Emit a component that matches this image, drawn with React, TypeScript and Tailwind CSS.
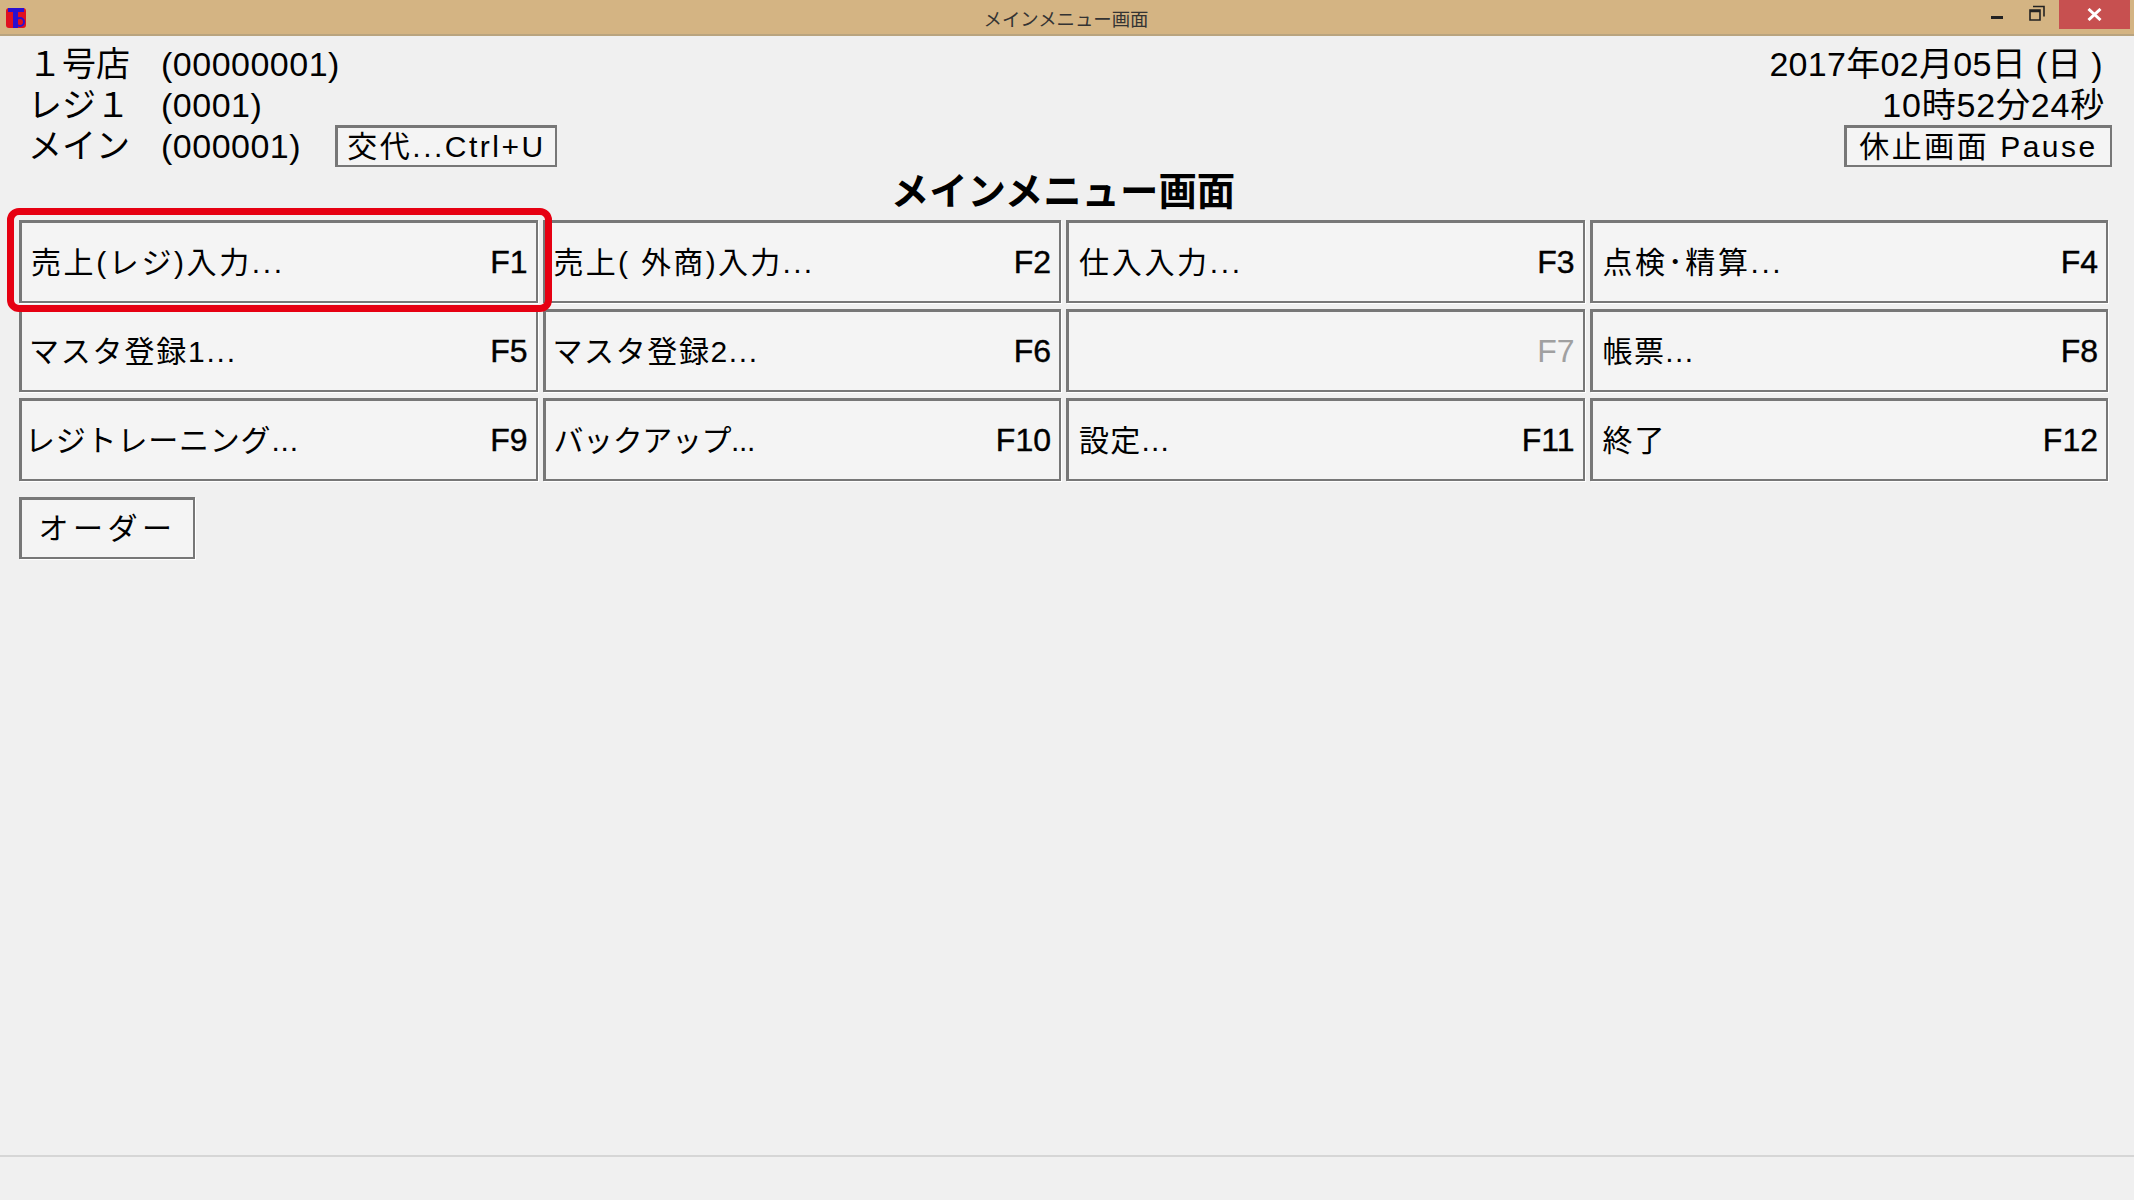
const FONT = "font-['Liberation_Sans','Noto_Sans_CJK_JP',sans-serif]";

const menu = [
  { label: "売上(レジ)入力...", key: "F1", pad: "pl-[9px]", track: "tracking-[2.6px]" },
  { label: "売上( 外商)入力...", key: "F2", pad: "pl-[8px]", track: "tracking-[2.3px]" },
  { label: "仕入入力...", key: "F3", pad: "pl-[10px]", track: "tracking-[2.7px]" },
  { label: "点検･精算...", key: "F4", pad: "pl-[10px]", track: "tracking-[2.6px]" },
  { label: "マスタ登録1...", key: "F5", pad: "pl-[7px]", track: "tracking-[1.8px]" },
  { label: "マスタ登録2...", key: "F6", pad: "pl-[7px]", track: "tracking-[1.6px]" },
  { label: "", key: "F7", pad: "pl-[10px]", track: "", disabled: true },
  { label: "帳票...", key: "F8", pad: "pl-[10px]", track: "tracking-[1.4px]" },
  { label: "レジトレーニング...", key: "F9", pad: "pl-[3px]", track: "tracking-[0.8px]" },
  { label: "バックアップ...", key: "F10", pad: "pl-[8px]", track: "tracking-[-0.4px]" },
  { label: "設定...", key: "F11", pad: "pl-[10px]", track: "tracking-[1.2px]" },
  { label: "終了", key: "F12", pad: "pl-[10px]", track: "tracking-[2px]" },
];

function MenuButton({ label, fkey, pad, track, disabled }: { label: string; fkey: string; pad: string; track: string; disabled?: boolean }) {
  return (
    <button className={`flex h-[83px] items-center justify-between border-2 border-t-[3px] border-l-[3px] border-[#777777] bg-[#f4f4f4] pr-[8px] text-[30px] shadow-[1px_1px_0_#ffffff] ${pad}`}>
      <span className={`whitespace-nowrap ${track}`}>{label}</span>
      <span className={`text-[32px] ${disabled ? "text-[#a0a0a0]" : "text-black [-webkit-text-stroke:0.4px_black]"}`}>{fkey}</span>
    </button>
  );
}

function SmallButton({ children, className }: { children: React.ReactNode; className: string }) {
  return (
    <button className={`flex h-[42px] items-center justify-center whitespace-nowrap border-2 border-t-[3px] border-l-[3px] border-[#777777] bg-[#f4f4f4] text-[30px] leading-none tracking-[2.5px] ${className}`}>
      {children}
    </button>
  );
}

export default function App() {
  return (
    <div className={`relative flex h-[1200px] w-[2134px] flex-col overflow-hidden bg-[#f0f0f0] text-black ${FONT}`}>
      {/* title bar */}
      <div className="relative flex h-[36px] shrink-0 items-start justify-between border-b-2 border-[#b9a47f] bg-[#d4b483]">
        <svg className="ml-[5px] mt-[7px]" width="22" height="22" viewBox="0 0 22 22">
          <rect x="1" y="1" width="20" height="20" rx="3" fill="#e01020" />
          <rect x="3" y="1" width="16" height="4" fill="#2a10d0" />
          <rect x="8" y="1" width="5" height="20" fill="#2a10d0" />
          <circle cx="15" cy="15" r="4" fill="none" stroke="#2a10d0" strokeWidth="2" />
        </svg>
        <div className="absolute inset-x-0 top-[7px] pr-[2px] text-center text-[18.4px] leading-[26px] text-[#333333]">メインメニュー画面</div>
        <div className="flex items-start">
          <svg className="mt-[3px]" width="20" height="20" viewBox="0 0 20 20">
            <rect x="4" y="13" width="12" height="3" fill="#222222" />
          </svg>
          <svg className="ml-[21px] mt-[3px]" width="18" height="20" viewBox="0 0 18 20">
            <path d="M5 3.5h11v10M2 7h10v10H2zM2 8.5h10" fill="none" stroke="#222222" strokeWidth="1.6" />
          </svg>
          <div className="ml-[13px] mr-[4px] flex h-[29px] w-[71px] items-center justify-center bg-[#c75050]">
            <svg width="15" height="13" viewBox="0 0 15 13">
              <path d="M1.5 1l12 11M13.5 1l-12 11" stroke="#ffffff" strokeWidth="3" />
            </svg>
          </div>
        </div>
      </div>

      {/* store info and clock */}
      <div className="flex justify-between pl-[28px] pr-[22px] pt-[8px] text-[34px] leading-[41px]">
        <div>
          <div className="flex"><span className="w-[133px] whitespace-nowrap">１号店</span><span className="tracking-[0.5px]">(00000001)</span></div>
          <div className="flex"><span className="w-[133px] whitespace-nowrap">レジ１</span><span className="tracking-[0.5px]">(0001)</span></div>
          <div className="flex items-start">
            <span className="w-[133px] whitespace-nowrap">メイン</span>
            <span className="w-[174px] tracking-[0.5px]">(000001)</span>
            <SmallButton className="-mt-[1px] w-[222px]">交代...Ctrl+U</SmallButton>
          </div>
        </div>
        <div className="flex flex-col items-end">
          <div className="pr-[9px] tracking-[0.3px]">2017年02月05日 (日 )</div>
          <div className="pr-[7px] tracking-[0.8px]">10時52分24秒</div>
          <SmallButton className="-mt-[1px] w-[268px]">休止画面 Pause</SmallButton>
        </div>
      </div>

      <h1 className="mt-[3px] pr-[8px] text-center text-[38.4px] font-bold leading-[44px]">メインメニュー画面</h1>

      {/* function key menu */}
      <div className="mt-[6px] pl-[19px] pr-[26px]">
        <div className="grid grid-cols-4 gap-x-[5px] gap-y-[6px]">
          {menu.map((m) => (
            <MenuButton key={m.key} label={m.label} fkey={m.key} pad={m.pad} track={m.track} disabled={m.disabled} />
          ))}
        </div>
        <button className="mt-[16px] h-[62px] w-[176px] border-2 border-t-[3px] border-l-[3px] border-[#777777] bg-[#f4f4f4] text-[30px] tracking-[4.5px] shadow-[1px_1px_0_#ffffff]">
          オーダー
        </button>
      </div>

      <div className="mt-auto h-[45px] shrink-0 border-t-2 border-[#d6d6d6]" />

      {/* highlight drawn over the F1 button */}
      <div className="pointer-events-none absolute left-[7px] top-[208px] h-[104px] w-[545px] rounded-[12px] border-[7px] border-[#e60012]" />
    </div>
  );
}
